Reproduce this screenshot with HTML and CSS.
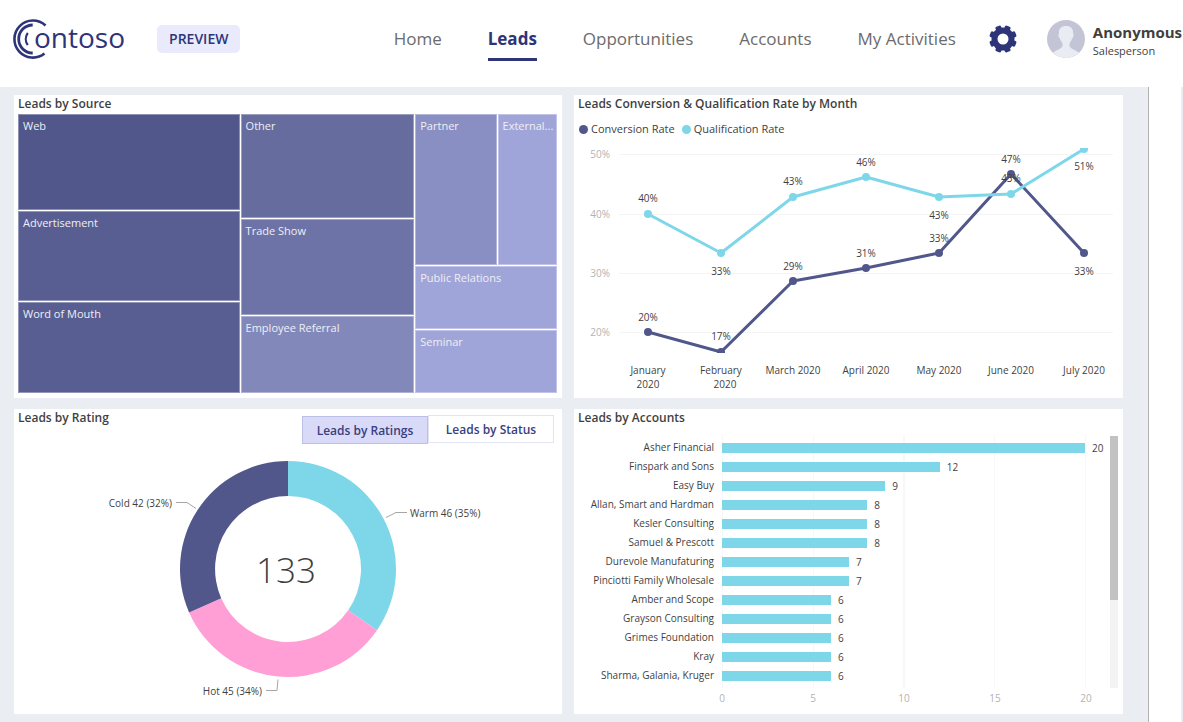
FILE: index.html
```html
<!DOCTYPE html>
<html lang="en">
<head>
<meta charset="utf-8">
<title>Contoso Leads</title>
<link rel="stylesheet" href="styles.css">
</head>
<body>
<header class="topbar">
  <div class="logo" role="img" aria-label="Contoso">
    <svg class="logo-mark" viewBox="0 0 36 42" width="36" height="42" fill="none" stroke="currentColor" aria-hidden="true">
      <path d="M34.500 7.500A18.500 18.500 0 1 0 33.500 35.500" stroke-width="2.600"/>
      <path d="M21.700 7A14 14 0 0 0 21.700 35" stroke-width="2.800"/>
      <path d="M16.800 15A10 10 0 0 0 16.800 27" stroke-width="2.200"/>
    </svg>
    <span class="logo-text">ontoso</span>
  </div>
  <span class="preview">PREVIEW</span>
  <nav class="nav">
    <a href="#home">Home</a>
    <a href="#leads" class="current">Leads</a>
    <a href="#opportunities">Opportunities</a>
    <a href="#accounts">Accounts</a>
    <a href="#activities">My Activities</a>
  </nav>
  <button class="gear" type="button" aria-label="Settings">
    <svg viewBox="-14 -14 28 28" width="28" height="28" fill="currentColor">
      <g>
        <rect x="-3" y="-13.800" width="6" height="27.600" rx="1.500" transform="rotate(22.500)"/>
        <rect x="-3" y="-13.800" width="6" height="27.600" rx="1.500" transform="rotate(67.500)"/>
        <rect x="-3" y="-13.800" width="6" height="27.600" rx="1.500" transform="rotate(112.500)"/>
        <rect x="-3" y="-13.800" width="6" height="27.600" rx="1.500" transform="rotate(157.500)"/>
      </g>
      <circle r="11.500"/>
      <circle r="5.500" fill="#fff"/>
    </svg>
  </button>
  <div class="user">
    <svg viewBox="0 0 38 38" width="38" height="38" aria-hidden="true">
      <circle cx="19" cy="19" r="19" fill="#c3c4d6"/>
      <path d="M19 6C14 6 11.500 9 12 13.500C11 14 11.500 17.500 13 18.500C13.500 20.500 14.500 22 15.500 23V26C14.500 29 9 30 6 32.800A19 19 0 0 0 32 32.800C29 30 23.500 29 22.500 26V23C23.500 22 24.500 20.500 25 18.500C26.500 17.500 27 14 26 13.500C26.500 9 24 6 19 6Z" fill="#eaecf3"/>
    </svg>
    <div class="user-text">
      <strong>Anonymous</strong>
      <span>Salesperson</span>
    </div>
  </div>
</header>

<div class="page">
<main class="board">
  <section class="card">
    <h2>Leads by Source</h2>
    <div class="treemap">
      <div class="col col-a">
        <div class="cell c1">Web</div>
        <div class="cell c2">Advertisement</div>
        <div class="cell c2">Word of Mouth</div>
      </div>
      <div class="col col-b">
        <div class="cell c3">Other</div>
        <div class="cell c4">Trade Show</div>
        <div class="cell c5">Employee Referral</div>
      </div>
      <div class="col col-c">
        <div class="split">
          <div class="cell c6">Partner</div>
          <div class="cell c7">External...</div>
        </div>
        <div class="cell c7">Public Relations</div>
        <div class="cell c7">Seminar</div>
      </div>
    </div>
  </section>

  <section class="card">
    <h2>Leads Conversion &amp; Qualification Rate by Month</h2>
    <div class="legend">
      <span class="key key-navy">Conversion Rate</span>
      <span class="key key-cyan">Qualification Rate</span>
    </div>
    <svg class="chart" viewBox="0 0 549 258" role="img" aria-label="Conversion and qualification rate by month">
      <clipPath id="plot"><rect x="40" y="8" width="505" height="205"/></clipPath>
      <path class="gridline" d="M45 14.500H539M45 74.500H539M45 133.500H539M45 192.500H539"/>
      <g class="tick end">
        <text x="36" y="18">50%</text><text x="36" y="78">40%</text><text x="36" y="137">30%</text><text x="36" y="196">20%</text>
      </g>
      <g clip-path="url(#plot)">
        <g class="navy">
          <polyline points="74,192 147,212 219,141 292,128 365,113 437,34 510,113"/>
          <circle cx="74" cy="192" r="4"/><circle cx="147" cy="212" r="4"/><circle cx="219" cy="141" r="4"/><circle cx="292" cy="128" r="4"/><circle cx="365" cy="113" r="4"/><circle cx="437" cy="34" r="4"/><circle cx="510" cy="113" r="4"/>
        </g>
        <g class="cyan">
          <polyline points="74,74 147,113 219,57 292,37 365,57 437,54 510,9"/>
          <circle cx="74" cy="74" r="4"/><circle cx="147" cy="113" r="4"/><circle cx="219" cy="57" r="4"/><circle cx="292" cy="37" r="4"/><circle cx="365" cy="57" r="4"/><circle cx="437" cy="54" r="4"/><circle cx="510" cy="9" r="4"/>
        </g>
      </g>
      <g class="label mid">
        <text x="74" y="62">40%</text><text x="147" y="135">33%</text><text x="219" y="45">43%</text><text x="292" y="26">46%</text><text x="365" y="79">43%</text><text x="437" y="42">43%</text><text x="510" y="30">51%</text>
        <text x="74" y="181">20%</text><text x="147" y="200">17%</text><text x="219" y="130">29%</text><text x="292" y="117">31%</text><text x="365" y="102">33%</text><text x="437" y="23">47%</text><text x="510" y="135">33%</text>
        <text x="74" y="234">January</text><text x="74" y="248">2020</text>
        <text x="147" y="234">February</text><text x="151" y="248">2020</text>
        <text x="219" y="234">March 2020</text><text x="292" y="234">April 2020</text><text x="365" y="234">May 2020</text><text x="437" y="234">June 2020</text><text x="510" y="234">July 2020</text>
      </g>
    </svg>
  </section>

  <section class="card">
    <div class="card-head">
      <h2>Leads by Rating</h2>
      <div class="tabs">
        <button type="button" class="tab active">Leads by Ratings</button>
        <button type="button" class="tab">Leads by Status</button>
      </div>
    </div>
    <svg class="chart" viewBox="0 0 548 260" role="img" aria-label="Leads by rating">
      <path fill="#7ed7e9" d="M274 16A108 108 0 0 1 363 185.200L334.200 165.300A73 73 0 0 0 274 51Z"/>
      <path fill="#ff9fd5" d="M363 185.200A108 108 0 0 1 175.100 167.400L207.200 153.300A73 73 0 0 0 334.200 165.300Z"/>
      <path fill="#51578a" d="M175.100 167.400A108 108 0 0 1 274 16V51A73 73 0 0 0 207.200 153.300Z"/>
      <path class="leader" d="M162 57.500H173L182 63.500M372 72.500L382 67.500H393M252 245.500H263L264 234.500"/>
      <g class="label">
        <text x="158" y="62" class="end">Cold 42 (32%)</text>
        <text x="396" y="72">Warm 46 (35%)</text>
        <text x="248" y="250" class="end">Hot 45 (34%)</text>
      </g>
      <text class="total mid" x="272" y="138">133</text>
    </svg>
  </section>

  <section class="card">
    <h2>Leads by Accounts</h2>
    <div class="accounts">
      <div class="names">
        <span>Asher Financial</span><span>Finspark and Sons</span><span>Easy Buy</span><span>Allan, Smart and Hardman</span><span>Kesler Consulting</span><span>Samuel &amp; Prescott</span><span>Durevole Manufaturing</span><span>Pinciotti Family Wholesale</span><span>Amber and Scope</span><span>Grayson Consulting</span><span>Grimes Foundation</span><span>Kray</span><span>Sharma, Galania, Kruger</span>
      </div>
      <div class="bars">
        <div class="bar" style="width:100%"><span>20</span></div>
        <div class="bar" style="width:60%"><span>12</span></div>
        <div class="bar" style="width:45%"><span>9</span></div>
        <div class="bar" style="width:40%"><span>8</span></div>
        <div class="bar" style="width:40%"><span>8</span></div>
        <div class="bar" style="width:40%"><span>8</span></div>
        <div class="bar" style="width:35%"><span>7</span></div>
        <div class="bar" style="width:35%"><span>7</span></div>
        <div class="bar" style="width:30%"><span>6</span></div>
        <div class="bar" style="width:30%"><span>6</span></div>
        <div class="bar" style="width:30%"><span>6</span></div>
        <div class="bar" style="width:30%"><span>6</span></div>
        <div class="bar" style="width:30%"><span>6</span></div>
      </div>
      <div class="scroll"><div class="thumb"></div></div>
      <div class="axis"><span>0</span><span>5</span><span>10</span><span>15</span><span>20</span></div>
    </div>
  </section>
</main>
<aside class="rail"></aside>
</div>
</body>
</html>
```

FILE: styles.css
```css
* { box-sizing: border-box; }
body {
  margin: 0;
  min-height: 100vh;
  display: flex;
  flex-direction: column;
  background: #fff;
  color: #3f3f3f;
  font-family: "Open Sans", "Noto Sans", sans-serif;
  font-size: 10px;
}

/* Header */
.topbar { display: flex; align-items: center; height: 87px; padding: 0 1px 9px 11px; }
.logo { display: flex; align-items: center; color: #2e3478; }
.logo-mark { flex: none; }
.logo-text { margin: 0 0 4px -13px; font-size: 28px; line-height: 36px; font-weight: 500; }
.preview {
  margin-left: 32px;
  padding: 0 12px;
  border-radius: 5px;
  background: #e9eafc;
  color: #2e3478;
  font-size: 14px;
  line-height: 28px;
  font-weight: 600;
}
.nav { display: flex; gap: 46px; margin-left: auto; }
.nav a {
  padding: 8px 0 6px;
  border-bottom: 3px solid transparent;
  color: #6b6b6b;
  font-size: 17px;
  line-height: 26px;
  text-decoration: none;
  white-space: nowrap;
}
.nav .current { border-color: #2e3478; color: #2e3478; font-weight: 700; }
.gear { margin: 0 30px 0 33px; padding: 0; border: 0; background: none; color: #2e3478; line-height: 0; }
.user { display: flex; align-items: center; gap: 8px; }
.user svg { flex: none; }
.user-text { display: flex; flex-direction: column; padding-top: 2px; }
.user-text strong { font-size: 15px; line-height: 20px; }
.user-text span { font-size: 11px; line-height: 17px; }

/* Page frame */
.page { flex: 1; display: flex; }
.board {
  flex: 1;
  display: grid;
  grid-template-columns: 548fr 549fr;
  grid-template-rows: auto auto;
  gap: 11px 12px;
  align-content: start;
  padding: 8px 25px 8px 14px;
  background: #eaedf2;
}
.rail { flex: none; width: 35px; border-left: 1px solid #b3b3b3; border-right: 2px solid #eaedf2; }
.card { display: flex; flex-direction: column; min-width: 0; background: #fff; }
h2 { margin: 0; padding: 0 4px; font-size: 12px; line-height: 18px; font-weight: 600; }
.chart { display: block; width: 100%; height: auto; }

/* Treemap */
.treemap { flex: 1; display: grid; grid-template-columns: 222fr 174fr 142fr; gap: 1px; margin: 1px 5px 5px 4px; min-height: 279px; }
.col { display: grid; gap: 1px; min-width: 0; }
.col-a { grid-template-rows: 96fr 91fr 91fr; }
.col-b { grid-template-rows: 104fr 97fr 77fr; }
.col-c { grid-template-rows: 151fr 63fr 63fr; }
.split { display: grid; grid-template-columns: 82fr 60fr; gap: 1px; }
.cell {
  min-width: 0;
  padding: 3px 0 0 5px;
  overflow: hidden;
  color: #eeeff5;
  font-size: 11px;
  line-height: 18px;
  white-space: nowrap;
  box-shadow: inset 0 0 0 1px rgba(255, 255, 255, 0.35);
}
.c1 { background: #51578a; }
.c2 { background: #585e91; }
.c3 { background: #676c9f; }
.c4 { background: #6d73a7; }
.c5 { background: #8388bb; }
.c6 { background: #8a8fc3; }
.c7 { background: #a0a5d9; }

/* Line chart */
.legend { display: flex; gap: 7px; padding: 7px 5px 2px; font-size: 11px; line-height: 18px; }
.key { display: flex; align-items: center; gap: 3px; }
.key::before { content: ""; width: 9px; height: 9px; border-radius: 50%; background: currentColor; }
.key-navy::before { background: #51578a; }
.key-cyan::before { background: #7ed7e9; }
.gridline { stroke: #f4f4f4; fill: none; }
.tick { fill: #b3b3b3; font-size: 10px; }
.label { fill: #3f3f3f; font-size: 10px; }
.mid { text-anchor: middle; }
.end { text-anchor: end; }
.navy { fill: #51578a; stroke: #51578a; }
.cyan { fill: #7ed7e9; stroke: #7ed7e9; }
.navy polyline, .cyan polyline { fill: none; stroke-width: 3; stroke-linejoin: round; }
.navy circle, .cyan circle { stroke: none; }

/* Donut */
.card-head { display: flex; justify-content: space-between; padding-right: 8px; height: 36px; }
.tabs { display: flex; align-items: flex-start; padding-top: 6px; }
.tab {
  width: 126px;
  height: 28px;
  padding: 1px 0 0;
  border: 1px solid #e3e4f2;
  background: #fff;
  color: #3a4080;
  font: 600 12px/25px "Open Sans", "Noto Sans", sans-serif;
}
.tab.active { margin-top: 1px; border-color: #bdc0e6; background: #d8daf8; }
.leader { fill: none; stroke: #a6a6a6; }
.total { fill: #3f3f3f; font-size: 35px; font-weight: 300; }

/* Accounts bars */
.accounts {
  display: grid;
  grid-template-columns: 140px 1fr 8px;
  column-gap: 8px;
  padding: 9px 5px 6px 0;
}
.names, .bars { display: flex; flex-direction: column; padding: 2px 0 3px; }
.names span { line-height: 19px; text-align: right; white-space: nowrap; }
.bars {
  margin-right: 16px;
  gap: 9px;
  padding: 7px 0;
  background: repeating-linear-gradient(to right, #f7f7f7 0 1px, transparent 1px 25%);
  border-right: 1px solid #f7f7f7;
}
.bar { height: 10px; background: #7ed7e9; display: flex; justify-content: flex-end; align-items: center; }
.bar span { width: 0; text-indent: 7px; line-height: 10px; white-space: nowrap; }
.scroll { background: #f3f3f3; }
.thumb { height: 65%; background: #c2c2c2; }
.axis {
  grid-column: 2;
  display: flex;
  justify-content: space-between;
  margin: 0 8px 0 -8px;
  color: #b3b3b3;
  line-height: 20px;
}
.axis span { width: 16px; text-align: center; }
```
